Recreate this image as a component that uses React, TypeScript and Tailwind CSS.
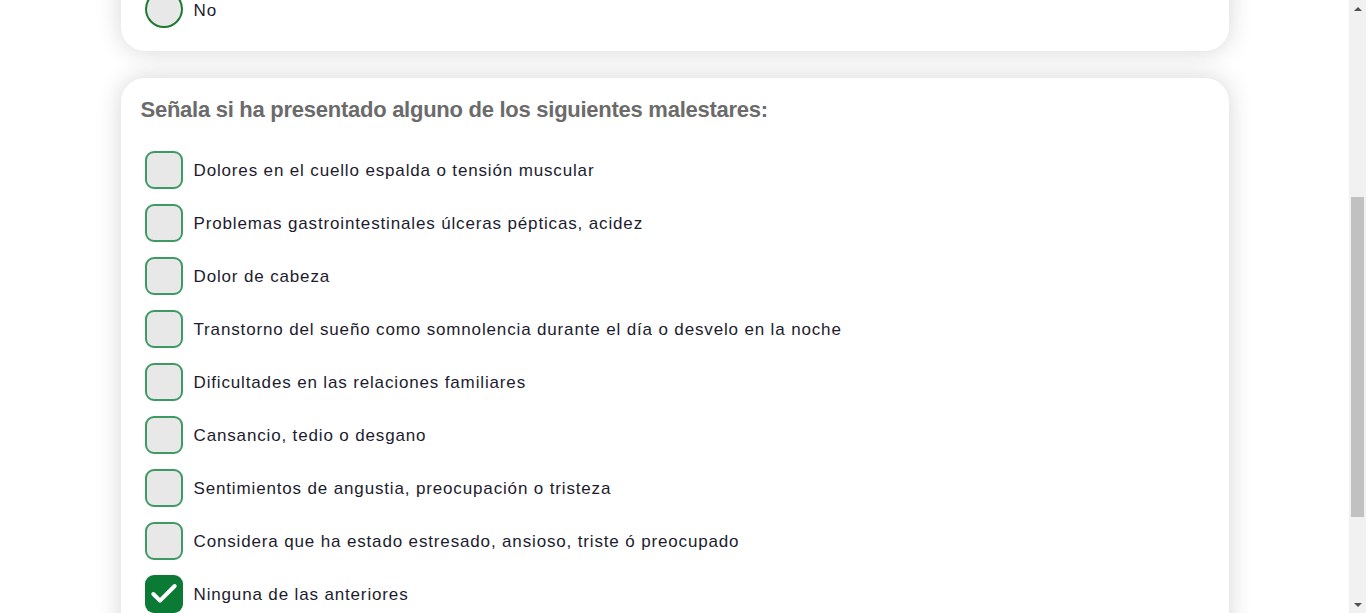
import { Check } from 'lucide-react'

const malestares = [
  'Dolores en el cuello espalda o tensión muscular',
  'Problemas gastrointestinales úlceras pépticas, acidez',
  'Dolor de cabeza',
  'Transtorno del sueño como somnolencia durante el día o desvelo en la noche',
  'Dificultades en las relaciones familiares',
  'Cansancio, tedio o desgano',
  'Sentimientos de angustia, preocupación o tristeza',
  'Considera que ha estado estresado, ansioso, triste ó preocupado',
  'Ninguna de las anteriores',
]

function Checkbox({ checked }: { checked: boolean }) {
  if (checked) {
    return (
      <div className="w-[38px] h-[38px] rounded-[9px] bg-[#0b7a35] flex items-center justify-center shrink-0">
        <Check size={32} strokeWidth={3} color="white" />
      </div>
    )
  }
  return <div className="w-[38px] h-[38px] rounded-[9px] border-2 border-[#3d9a62] bg-[#e8e8e8] shrink-0" />
}

export default function App() {
  return (
    <div className="w-[1366px] h-[613px] overflow-hidden flex bg-white" style={{ fontFamily: '"Liberation Sans", Arial, sans-serif' }}>
      <div className="flex-1 overflow-hidden">
        <div className="max-w-[1108px] mx-auto -mt-[51px] flex flex-col gap-[27px]">
          {/* previous question, mostly scrolled away */}
          <div className="bg-white rounded-[24px] shadow-[0_0_24px_rgba(0,0,0,0.17)] px-5 pt-[41px] pb-[24px]">
            <label className="flex items-center gap-[11px] pl-[4px] h-[37px]">
              <span className="w-[38px] h-[38px] rounded-full border-2 border-[#1d7a32] bg-[#e8e8e8] shrink-0" />
              <span className="text-[17px] tracking-[0.06em] text-[#1c1c2e] pt-[4px]">No</span>
            </label>
          </div>

          <div className="bg-white rounded-[24px] shadow-[0_0_24px_rgba(0,0,0,0.17)] px-5 pt-[18px] pb-8">
            <h2 className="text-[22px] font-bold text-[#6b6b6b] leading-[28px] tracking-[-0.012em]">
              Señala si ha presentado alguno de los siguientes malestares:
            </h2>
            <div className="flex flex-col gap-[15px] mt-[27px] pl-[4px]">
              {malestares.map((m, i) => (
                <label key={i} className="flex items-center gap-[11px] h-[38px]">
                  <Checkbox checked={i === malestares.length - 1} />
                  <span className="text-[17px] tracking-[0.05em] text-[#1c1c2e] pt-[2px]">{m}</span>
                </label>
              ))}
            </div>
          </div>
        </div>
      </div>

      {/* fake scrollbar */}
      <div className="w-[17px] h-full bg-[#f1f1f1] flex flex-col items-center">
        <div className="h-[17px] flex items-center justify-center">
          <div className="w-0 h-0 border-l-[4px] border-r-[4px] border-b-[4px] border-l-transparent border-r-transparent border-b-[#505050]" />
        </div>
        <div className="h-[180px]" />
        <div className="w-[13px] h-[320px] bg-[#c1c1c1]" />
        <div className="flex-1" />
        <div className="h-[17px] flex items-center justify-center">
          <div className="w-0 h-0 border-l-[4px] border-r-[4px] border-t-[4px] border-l-transparent border-r-transparent border-t-[#505050]" />
        </div>
      </div>
    </div>
  )
}
